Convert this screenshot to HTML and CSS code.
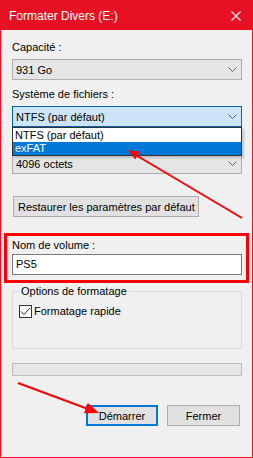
FILE: index.html
```html
<!DOCTYPE html>
<html lang="fr">
<head>
<meta charset="utf-8">
<title>Formater Divers (E:)</title>
<link rel="stylesheet" href="styles.css">
</head>
<body>
<div class="window">
  <div class="titlebar">
    <span class="title">Formater Divers (E:)</span>
    <svg class="close" width="10" height="10" viewBox="0 0 10 10"><path d="M0.5 0.5 L9.5 9.5 M9.5 0.5 L0.5 9.5" stroke="#fff" stroke-width="1.1" fill="none"/></svg>
  </div>
  <div class="content">
    <div class="field">
      <div class="label">Capacité :</div>
      <div class="combo"><span>931 Go</span><svg class="chev" width="9" height="5" viewBox="0 0 9 5"><path d="M0.5 0.5 L4.5 4.5 L8.5 0.5" stroke="#606060" fill="none"/></svg></div>
    </div>
    <div class="field gap">
      <div class="label">Système de fichiers :</div>
      <div class="combo-wrap">
        <div class="combo focus"><span>NTFS (par défaut)</span><svg class="chev" width="9" height="5" viewBox="0 0 9 5"><path d="M0.5 0.5 L4.5 4.5 L8.5 0.5" stroke="#606060" fill="none"/></svg></div>
        <ul class="dropdown">
          <li class="item">NTFS (par défaut)</li>
          <li class="item sel">exFAT</li>
        </ul>
      </div>
    </div>
    <div class="field gap">
      <div class="label covered">Taille d'unité d'allocation :</div>
      <div class="combo"><span>4096 octets</span><svg class="chev" width="9" height="5" viewBox="0 0 9 5"><path d="M0.5 0.5 L4.5 4.5 L8.5 0.5" stroke="#606060" fill="none"/></svg></div>
    </div>
    <div class="restore-row"><button class="btn restore">Restaurer les paramètres par défaut</button></div>
    <div class="highlight">
      <div class="label">Nom de volume :</div>
      <div class="textbox">PS5</div>
    </div>
    <fieldset class="group">
      <legend>Options de formatage</legend>
      <div class="check-row">
        <span class="checkbox"><svg width="11" height="11" viewBox="0 0 11 11"><path d="M1 5.5 L4 8.5 L10 2" stroke="#222" stroke-width="1" fill="none"/></svg></span>
        <span>Formatage rapide</span>
      </div>
    </fieldset>
    <div class="progress"></div>
    <div class="actions">
      <button class="btn primary">Démarrer</button>
      <button class="btn">Fermer</button>
    </div>
  </div>
  <svg class="annot" width="253" height="458" viewBox="0 0 253 458">
    <line x1="242" y1="218" x2="134" y2="154" stroke="#ff0000" stroke-width="2"/>
    <polygon points="128,150 139.8,151.8 135.2,159.5" fill="#ff0000"/>
    <line x1="18" y1="383" x2="88" y2="409" stroke="#ff0000" stroke-width="2"/>
    <polygon points="99,413 84,413.3 87.8,402.9" fill="#ff0000"/>
  </svg>
</div>
</body>
</html>
```

FILE: styles.css
```css
* { box-sizing: border-box; }
html, body { margin: 0; padding: 0; }
body {
  width: 253px;
  height: 458px;
  overflow: hidden;
  font-family: "Liberation Sans", Arial, sans-serif;
  font-size: 11px;
  color: #000;
  background: #f0f0f0;
}
.window {
  position: relative;
  width: 253px;
  height: 458px;
  background: #f0f0f0;
  border: 1px solid #e81123;
  border-top: 0;
  display: flex;
  flex-direction: column;
}
.titlebar {
  height: 30px;
  margin: 0 -1px;
  background: #e81123;
  color: #fff;
  font-size: 12px;
  display: flex;
  align-items: center;
  justify-content: space-between;
  padding: 1px 12px 0 9px;
}
.close { display: block; }
.content {
  display: flex;
  flex-direction: column;
  padding: 10px 10px 0 11px;
}
.label {
  line-height: 15px;
  height: 15px;
  white-space: nowrap;
}
.label.covered { visibility: hidden; }
.field .label { margin-bottom: 4px; }
.field.gap { margin-top: 7px; }
.combo {
  height: 21px;
  background: #e5e5e5;
  border: 1px solid #adadad;
  display: flex;
  align-items: center;
  justify-content: space-between;
  padding: 0 4px 0 3px;
  white-space: nowrap;
}
.combo.focus {
  background: #cce4f7;
  border-color: #0a64ad;
}
.chev { display: block; }
.combo-wrap { position: relative; }
.dropdown {
  position: absolute;
  z-index: 2;
  top: 100%;
  left: 0;
  right: 0;
  margin: 0;
  padding: 0;
  list-style: none;
  background: #fff;
  border: 1px solid #333;
  box-shadow: 2px 2px 2px rgba(0, 0, 0, 0.18);
}
.item {
  height: 14px;
  line-height: 14px;
  padding-left: 2px;
  white-space: nowrap;
}
.item.sel {
  height: 13px;
  line-height: 13px;
  background: #0078d7;
  color: #fff;
}
.btn {
  font-family: inherit;
  font-size: inherit;
  color: #000;
  height: 21px;
  background: #e1e1e1;
  border: 1px solid #adadad;
  padding: 0;
  margin: 0;
  white-space: nowrap;
}
.restore-row { margin-top: 22px; display: flex; }
.restore {
  margin-left: 1px;
  width: 186px;
  text-align: left;
  padding-left: 4px;
}
.highlight {
  margin: 16px -7px 0 -8px;
  border: 3px solid #ff0000;
  padding: 2px 4px 5px 5px;
}
.highlight .label { margin-bottom: 1px; }
.textbox {
  height: 21px;
  background: #fff;
  border: 1px solid #7a7a7a;
  padding-left: 3px;
  line-height: 19px;
}
.group {
  margin: 1px 0 0 0;
  border: 1px solid #dcdcdc;
  padding: 5px 6px 29px 6px;
  min-width: 0;
}
.group legend {
  padding: 0 2px;
  line-height: 15px;
}
.check-row {
  display: flex;
  align-items: center;
  gap: 2px;
  line-height: 15px;
}
.checkbox {
  width: 13px;
  height: 13px;
  background: #fff;
  border: 1px solid #333;
  display: flex;
  align-items: center;
  justify-content: center;
}
.checkbox svg { display: block; }
.progress {
  margin-top: 14px;
  height: 13px;
  background: #e6e6e6;
  border: 1px solid #bcbcbc;
}
.actions {
  margin-top: 29px;
  display: flex;
  justify-content: flex-end;
  gap: 9px;
  padding-right: 2px;
}
.actions .btn { width: 73px; }
.actions .btn.primary {
  width: 72px;
  border: 2px solid #0078d7;
}
.annot {
  position: absolute;
  top: 0;
  left: -1px;
  pointer-events: none;
  z-index: 5;
}
```
